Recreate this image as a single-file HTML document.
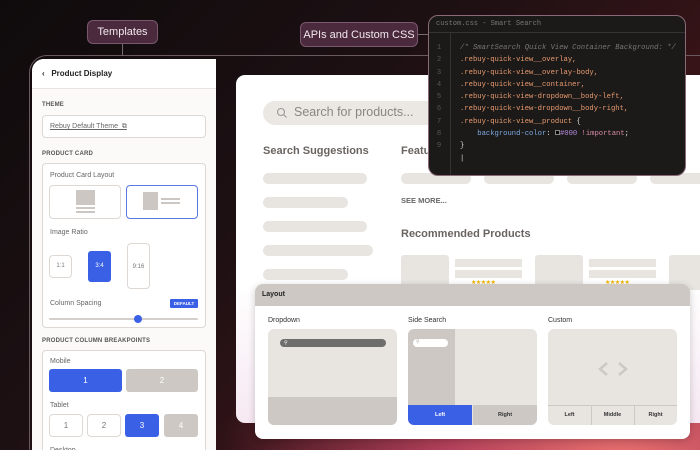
<!DOCTYPE html>
<html style="width:700px;height:450px;overflow:hidden"><head><style>
*{margin:0;padding:0;box-sizing:border-box}
body{width:700px;height:450px;overflow:hidden;position:relative;font-family:"Liberation Sans",sans-serif;
background:radial-gradient(ellipse 500px 260px at 620px 460px,#e8706e 0%,#b2405a 35%,rgba(90,30,45,0) 80%),linear-gradient(135deg,#0f0b0c 0%,#1d1013 40%,#3a1418 70%,#4a1a22 100%);}
.abs{position:absolute}
.pill{position:absolute;background:#4a2a3c;border:1px solid #7a5870;color:#f2e8ee;font-size:11px;border-radius:6px;display:flex;align-items:center;justify-content:center;white-space:nowrap}
.lbl{font-size:6px;color:#555;font-weight:bold;letter-spacing:.2px}
.t7{font-size:7px;color:#666}
.box{position:absolute;background:#fff;border:1px solid #ddd8d4;border-radius:4px}
.bar{position:absolute;background:#e8e5e1;border-radius:6px;height:11px}
.code{font-family:"Liberation Mono",monospace;font-size:7.2px;line-height:12.3px;color:#e89a6f;white-space:pre}
</style></head><body>
<div class="abs" style="left:29px;top:55px;width:690px;height:410px;border:1px solid #6a5a60;border-radius:18px"></div>
<div class="abs" style="left:122px;top:44px;width:1px;height:12px;background:#7a6870"></div>
<div class="pill" style="left:87px;top:20px;width:71px;height:24px">Templates</div>
<div class="abs" style="left:410px;top:34px;width:20px;height:1px;background:#7a6870"></div>
<div class="pill" style="left:300px;top:22px;width:118px;height:25px">APIs and Custom CSS</div>

<div class="abs" style="left:236px;top:75px;width:480px;height:348px;background:linear-gradient(#fff 60%,#f6e8f2 100%);border-radius:9px"></div>
<div class="abs" style="left:263px;top:101px;width:200px;height:24px;background:#ebe8e4;border-radius:12px"></div>
<svg class="abs" style="left:276px;top:107px" width="12" height="12"><circle cx="5" cy="5" r="3.5" fill="none" stroke="#999" stroke-width="1.1"/><line x1="7.5" y1="7.5" x2="10.5" y2="10.5" stroke="#999" stroke-width="1.1"/></svg>
<div class="abs" style="left:294px;top:105px;font-size:12.5px;color:#8a8582">Search for products...</div>
<div class="abs" style="left:263px;top:145px;font-size:11px;color:#6a6461;font-weight:bold">Search Suggestions</div>
<div class="abs" style="left:401px;top:145px;font-size:11px;color:#6a6461;font-weight:bold">Featu</div>
<div class="bar" style="left:263px;top:173px;width:104px"></div>
<div class="bar" style="left:263px;top:197px;width:85px"></div>
<div class="bar" style="left:263px;top:221px;width:104px"></div>
<div class="bar" style="left:263px;top:245px;width:110px"></div>
<div class="bar" style="left:263px;top:269px;width:85px"></div>
<div class="bar" style="left:401px;top:173px;width:70px"></div>
<div class="bar" style="left:484px;top:173px;width:70px"></div>
<div class="bar" style="left:567px;top:173px;width:70px"></div>
<div class="bar" style="left:650px;top:173px;width:60px"></div>
<div class="abs" style="left:401px;top:196px;font-size:7.5px;color:#666;font-weight:bold">SEE MORE...</div>
<div class="abs" style="left:401px;top:228px;font-size:11px;color:#6a6461;font-weight:bold">Recommended Products</div>
<div class="abs" style="left:401px;top:255px;width:48px;height:35px;background:#e8e5e1;border-radius:3px"></div>
<div class="abs" style="left:455px;top:259px;width:67px;height:8px;background:#e8e5e1"></div>
<div class="abs" style="left:455px;top:270px;width:67px;height:8px;background:#e8e5e1"></div>
<div class="abs" style="left:535px;top:255px;width:48px;height:35px;background:#e8e5e1;border-radius:3px"></div>
<div class="abs" style="left:589px;top:259px;width:67px;height:8px;background:#e8e5e1"></div>
<div class="abs" style="left:589px;top:270px;width:67px;height:8px;background:#e8e5e1"></div>
<div class="abs" style="left:669px;top:255px;width:40px;height:35px;background:#e8e5e1;border-radius:3px"></div>
<div class="abs" style="left:471px;top:279px;font-size:6px;color:#f0b400;letter-spacing:-.5px">★★★★★</div>
<div class="abs" style="left:605px;top:279px;font-size:6px;color:#f0b400;letter-spacing:-.5px">★★★★★</div>

<div class="abs" style="left:428px;top:15px;width:258px;height:161px;background:#1c1a19;border:1px solid #8a6a78;border-radius:10px;overflow:hidden">
 <div style="height:17px;border-bottom:1px solid #333;font-family:'Liberation Mono',monospace;font-size:7px;color:#777;padding:4px 0 0 7px">custom.css - Smart Search</div>
 <div class="abs" style="left:21px;top:17px;width:1px;height:150px;background:#333"></div>
 <div class="abs code" style="left:0;top:26px;width:20px;text-align:center;color:#555">1
2
3
4
5
6
7
8
9</div>
 <div class="abs code" style="left:31px;top:26px"><span style="color:#777;font-style:italic">/* SmartSearch Quick View Container Background: */</span>
.rebuy-quick-view__overlay,
.rebuy-quick-view__overlay-body,
.rebuy-quick-view__container,
.rebuy-quick-view-dropdown__body-left,
.rebuy-quick-view-dropdown__body-right,
.rebuy-quick-view__product <span style="color:#ddd">{</span>
    <span style="color:#7aa8e0">background-color</span><span style="color:#ddd">:</span> <span style="background:#000;border:1px solid #888;display:inline-block;width:5px;height:5px"></span><span style="color:#b58ae0">#000</span> <span style="color:#d88aa8">!important</span><span style="color:#ddd">;</span>
<span style="color:#ddd">}</span>
<span style="color:#ddd">|</span></div>
</div>

<div class="abs" style="left:32px;top:59px;width:184px;height:400px;background:#fbfaf8;border-radius:12px 0 0 0;overflow:hidden">
 <div style="height:30px;background:#fff;border-bottom:1px solid #e6e2de;font-size:8px;font-weight:bold;color:#222;padding:10px 0 0 10px">‹&nbsp;&nbsp; Product Display</div>
 <div class="abs lbl" style="left:10px;top:43px">THEME</div>
 <div class="box" style="left:10px;top:56px;width:164px;height:23px"></div>
 <div class="abs t7" style="left:18px;top:64px;text-decoration:underline">Rebuy Default Theme&nbsp;&nbsp;⧉</div>
 <div class="abs lbl" style="left:10px;top:92px">PRODUCT CARD</div>
 <div class="box" style="left:10px;top:104px;width:164px;height:165px"></div>
 <div class="abs t7" style="left:18px;top:113px">Product Card Layout</div>
 <div class="box" style="left:17px;top:126px;width:72px;height:34px"></div>
 <div class="abs" style="left:44px;top:131px;width:19px;height:15px;background:#ccc7c2"></div>
 <div class="abs" style="left:44px;top:148px;width:19px;height:2px;background:#ccc7c2"></div>
 <div class="abs" style="left:44px;top:152px;width:19px;height:2px;background:#ccc7c2"></div>
 <div class="box" style="left:94px;top:126px;width:72px;height:34px;border-color:#5a78e0"></div>
 <div class="abs" style="left:111px;top:133px;width:15px;height:18px;background:#ccc7c2"></div>
 <div class="abs" style="left:129px;top:139px;width:19px;height:2px;background:#ccc7c2"></div>
 <div class="abs" style="left:129px;top:143px;width:19px;height:2px;background:#ccc7c2"></div>
 <div class="abs t7" style="left:18px;top:170px">Image Ratio</div>
 <div class="box" style="left:17px;top:196px;width:23px;height:23px"></div>
 <div class="abs" style="left:17px;top:204px;width:23px;text-align:center;font-size:6px;color:#777">1:1</div>
 <div class="abs" style="left:56px;top:192px;width:23px;height:31px;background:#3a60e6;border-radius:3px;color:#fff;font-size:6px;text-align:center;line-height:31px">3:4</div>
 <div class="box" style="left:95px;top:184px;width:23px;height:46px;text-align:center;line-height:46px;font-size:6px;color:#777">9:16</div>
 <div class="abs t7" style="left:18px;top:241px">Column Spacing</div>
 <div class="abs" style="left:138px;top:240px;width:28px;height:9px;background:#3a60e6;border-radius:1px;color:#fff;font-size:4.5px;font-weight:bold;text-align:center;line-height:9px">DEFAULT</div>
 <div class="abs" style="left:17px;top:259px;width:149px;height:2px;background:#d4cfca;border-radius:1px"></div>
 <div class="abs" style="left:102px;top:256px;width:8px;height:8px;background:#3a60e6;border-radius:50%"></div>
 <div class="abs lbl" style="left:10px;top:279px">PRODUCT COLUMN BREAKPOINTS</div>
 <div class="box" style="left:10px;top:291px;width:164px;height:120px"></div>
 <div class="abs t7" style="left:18px;top:299px">Mobile</div>
 <div class="abs" style="left:17px;top:310px;width:73px;height:23px;background:#3a60e6;border-radius:3px;color:#fff;font-size:8px;text-align:center;line-height:23px">1</div>
 <div class="abs" style="left:94px;top:310px;width:72px;height:23px;background:#cdc8c3;border-radius:3px;color:#fff;font-size:8px;text-align:center;line-height:23px">2</div>
 <div class="abs t7" style="left:18px;top:343px">Tablet</div>
 <div class="box" style="left:17px;top:355px;width:34px;height:23px;text-align:center;line-height:21px;font-size:8px;color:#777">1</div>
 <div class="box" style="left:55px;top:355px;width:34px;height:23px;text-align:center;line-height:21px;font-size:8px;color:#777">2</div>
 <div class="abs" style="left:93px;top:355px;width:34px;height:23px;background:#3a60e6;border-radius:3px;color:#fff;font-size:8px;text-align:center;line-height:23px">3</div>
 <div class="abs" style="left:132px;top:355px;width:34px;height:23px;background:#cdc8c3;border-radius:3px;color:#fff;font-size:8px;text-align:center;line-height:23px">4</div>
 <div class="abs t7" style="left:18px;top:388px">Desktop</div>
</div>

<div class="abs" style="left:255px;top:284px;width:435px;height:155px;background:#fff;border-radius:8px;overflow:hidden;box-shadow:0 2px 8px rgba(0,0,0,.2)">
 <div style="height:22px;background:#cdc8c3;font-size:7px;font-weight:bold;color:#222;padding:7px 0 0 7px">Layout</div>
 <div class="abs t7" style="left:13px;top:33px;color:#333">Dropdown</div>
 <div class="abs t7" style="left:153px;top:33px;color:#333">Side Search</div>
 <div class="abs t7" style="left:293px;top:33px;color:#333">Custom</div>
 <div class="abs" style="left:13px;top:45px;width:129px;height:96px;background:#e8e5e1;border-radius:6px;overflow:hidden">
  <div class="abs" style="left:12px;top:10px;width:106px;height:8px;background:#6e6e6e;border-radius:4px"></div>
  <div class="abs" style="left:16px;top:11px;color:#fff;font-size:5px">⚲</div>
  <div class="abs" style="left:0;top:68px;width:129px;height:28px;background:#cdc8c3"></div>
 </div>
 <div class="abs" style="left:153px;top:45px;width:129px;height:96px;background:#e8e5e1;border-radius:6px;overflow:hidden">
  <div class="abs" style="left:0;top:0;width:47px;height:76px;background:#cdc8c3"></div>
  <div class="abs" style="left:5px;top:10px;width:35px;height:8px;background:#fff;border-radius:4px;font-size:5px;color:#aaa;padding-left:3px">⚲</div>
  <div class="abs" style="left:0;top:76px;width:64px;height:20px;background:#3a60e6;color:#fff;font-size:5.5px;font-weight:bold;text-align:center;line-height:20px">Left</div>
  <div class="abs" style="left:65px;top:76px;width:64px;height:20px;background:#cdc8c3;color:#333;font-size:5.5px;font-weight:bold;text-align:center;line-height:20px">Right</div>
 </div>
 <div class="abs" style="left:293px;top:45px;width:129px;height:96px;background:#e8e5e1;border-radius:6px;overflow:hidden">
  <svg class="abs" style="left:48px;top:32px" width="34" height="16"><path d="M11 2 L4 8 L11 14 M23 2 L30 8 L23 14" fill="none" stroke="#cdc8c3" stroke-width="2.5"/></svg>
  <div class="abs" style="left:0;top:76px;width:129px;height:1px;background:#cdc8c3"></div>
  <div class="abs" style="left:43px;top:76px;width:1px;height:20px;background:#cdc8c3"></div>
  <div class="abs" style="left:86px;top:76px;width:1px;height:20px;background:#cdc8c3"></div>
  <div class="abs" style="left:0;top:77px;width:43px;font-size:5.5px;font-weight:bold;text-align:center;line-height:19px;color:#333">Left</div>
  <div class="abs" style="left:43px;top:77px;width:43px;font-size:5.5px;font-weight:bold;text-align:center;line-height:19px;color:#333">Middle</div>
  <div class="abs" style="left:86px;top:77px;width:43px;font-size:5.5px;font-weight:bold;text-align:center;line-height:19px;color:#333">Right</div>
 </div>
</div>
</body></html>
